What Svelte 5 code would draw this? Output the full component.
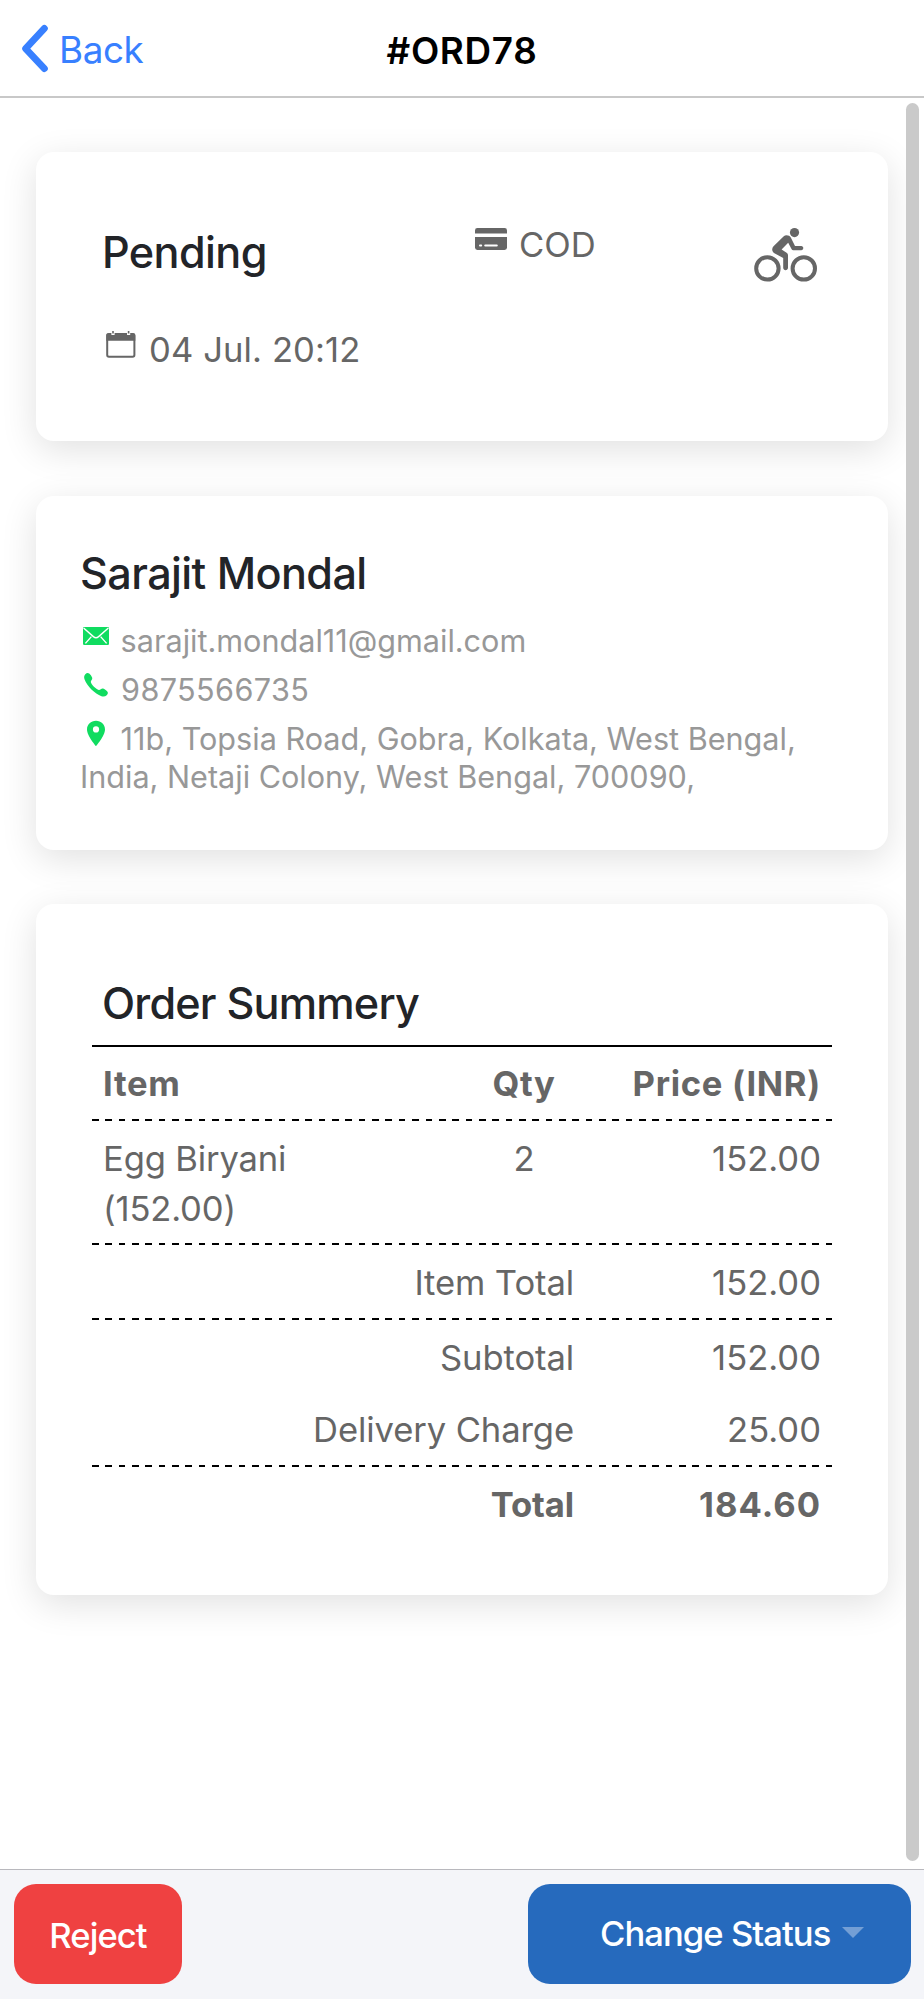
<script>
  const order = {
    id: "#ORD78",
    status: "Pending",
    payment: "COD",
    date: "04 Jul. 20:12",
  };

  const customer = {
    name: "Sarajit Mondal",
    email: "sarajit.mondal11@gmail.com",
    phone: "9875566735",
    address:
      "11b, Topsia Road, Gobra, Kolkata, West Bengal, India, Netaji Colony, West Bengal, 700090,",
  };

  const items = [{ name: "Egg Biryani", unit: "(152.00)", qty: 2, price: "152.00" }];

  const totals = [
    { label: "Item Total", value: "152.00", ruled: true },
    { label: "Subtotal", value: "152.00", ruled: true },
    { label: "Delivery Charge", value: "25.00" },
    { label: "Total", value: "184.60", ruled: true, strong: true },
  ];
</script>

<div class="page">
  <header class="toolbar">
    <button class="back">
      <svg width="28" height="50" viewBox="0 0 28 50" fill="none">
        <path
          d="M23.4 4.4L4.6 24.6L23.4 44.6"
          stroke="currentColor"
          stroke-width="6.8"
          stroke-linecap="round"
          stroke-linejoin="round"
        />
      </svg>
      <span>Back</span>
    </button>
    <h1 class="title">{order.id}</h1>
  </header>

  <main class="content">
    <section class="card status-card">
      <h2 class="heading">{order.status}</h2>
      <div class="meta payment">
        <svg width="32" height="22" viewBox="0 0 32 22">
          <path d="M0 5.4V2.4A2.4 2.4 0 0 1 2.4 0H29.6A2.4 2.4 0 0 1 32 2.4V5.4Z" fill="currentColor" />
          <path d="M0 9H32V19.6A2.4 2.4 0 0 1 29.6 22H2.4A2.4 2.4 0 0 1 0 19.6Z" fill="currentColor" />
          <path d="M5 17.6h1.2M10.2 17.6h11.6" stroke="#fff" stroke-width="2" stroke-linecap="round" />
        </svg>
        <span>{order.payment}</span>
      </div>
      <svg class="bike" width="64" height="54" viewBox="0 0 64 54">
        <g fill="none" stroke="currentColor">
          <circle cx="13.4" cy="40.4" r="11.2" stroke-width="4" />
          <circle cx="49.8" cy="40.4" r="11.2" stroke-width="4" />
        </g>
        <circle cx="40.5" cy="4.6" r="4.6" fill="currentColor" />
        <path
          d="M29.5 8.4C31.5 6.7 35.4 6.9 36.8 9.6L41 18H47.2C50 18 50 22.2 47.2 22.2H39.4C38.5 22.2 37.9 21.8 37.5 21L34.2 14.8L27.6 21.4L32.6 24.8C33.6 25.5 34 26.3 34 27.5V39.8C34 42.9 29.2 42.9 29.2 39.8V30L20.4 25.2C17.8 23.7 17.5 20.5 19.5 18.3Z"
          fill="currentColor"
        />
      </svg>
      <div class="meta date">
        <svg width="30" height="27" viewBox="0 0 30 27">
          <rect x="1.2" y="3" width="27.2" height="22.8" rx="1.8" fill="none" stroke="currentColor" stroke-width="2" />
          <path d="M.3 9.8V4.4A2 2 0 0 1 2.3 2.2H27.3A2 2 0 0 1 29.3 4.4V9.8Z" fill="currentColor" />
          <path d="M7 0V4M22.6 0V4" stroke="#fff" stroke-width="3.2" />
          <path d="M7 0V2.4M22.6 0V2.4" stroke="currentColor" stroke-width="1.6" />
        </svg>
        <span>{order.date}</span>
      </div>
    </section>

    <section class="card customer-card">
      <h2 class="heading">{customer.name}</h2>
      <p class="contact">
        <svg width="28" height="27" viewBox="0 0 28 27">
          <rect x="1" y="5" width="26" height="18" rx="1.2" fill="currentColor" />
          <path
            d="M1.6 6L11.4 14.6Q14 16.8 16.6 14.6L26.4 6M3.4 21.4L9.4 14.6M24.6 21.4L18.6 14.6"
            fill="none"
            stroke="#fff"
            stroke-width="1.4"
          />
        </svg>
        {customer.email}
      </p>
      <p class="contact phone">
        <svg width="28" height="27" viewBox="0 0 28 27">
          <path
            d="M3.3 3.2C4.6 1.8 6 1.5 7.2 2.6C8.6 4 9.7 5.4 10.2 6.8C10.8 8.6 8.6 9.4 8.8 11.1C9.2 13.6 14.2 18.5 16.8 18.9C18.4 19.1 19.4 17 21.1 17.5C22.7 18 24 19.1 25.3 20.4C26.3 21.5 26 23 24.7 24.2C23.3 25.5 21.5 25.8 19.5 25.2C12.8 23 5 15.2 2.6 8.6C1.9 6.5 1.9 4.6 3.3 3.2Z"
            fill="currentColor"
          />
        </svg>
        {customer.phone}
      </p>
      <p class="contact">
        <svg width="28" height="27" viewBox="0 0 28 27">
          <path
            d="M14 .8C8.9 .8 5 4.6 5 9.4C5 15.9 14 26 14 26S23 15.9 23 9.4C23 4.6 19.1 .8 14 .8ZM14 12.5A3.1 3.1 0 1 1 14 6.3A3.1 3.1 0 0 1 14 12.5Z"
            fill="currentColor"
          />
        </svg>
        {customer.address}
      </p>
    </section>

    <section class="card summary-card">
      <h2 class="heading">Order Summery</h2>
      <div class="table">
        <div class="row head">
          <span>Item</span>
          <span class="qty">Qty</span>
          <span class="price">Price (INR)</span>
        </div>
        {#each items as item}
          <div class="row ruled">
            <span class="name">{item.name}<br />{item.unit}</span>
            <span class="qty">{item.qty}</span>
            <span class="price">{item.price}</span>
          </div>
        {/each}
        {#each totals as line}
          <div class="row" class:ruled={line.ruled} class:strong={line.strong}>
            <span class="label">{line.label}</span>
            <span class="price">{line.value}</span>
          </div>
        {/each}
      </div>
    </section>

    <div class="scrollbar"></div>
  </main>

  <footer class="actions">
    <button class="btn reject">Reject</button>
    <button class="btn change">
      <span>Change Status</span>
      <span class="caret"></span>
    </button>
  </footer>
</div>

<style>
  :global(body) {
    background: #fff;
  }

  .page {
    box-sizing: border-box;
    width: 924px;
    height: 2000px;
    padding-bottom: 1px;
    display: flex;
    flex-direction: column;
    overflow: hidden;
    background: #fff;
    color: #666;
    font-family: Inter, "Liberation Sans", sans-serif;
    font-size: 34.6px;
    line-height: 50px;
  }

  h1,
  h2,
  p {
    margin: 0;
  }

  button {
    border: none;
    padding: 0;
    font-family: inherit;
    cursor: pointer;
  }

  .toolbar {
    box-sizing: border-box;
    flex: none;
    height: 98px;
    display: grid;
    grid-template-columns: 1fr auto 1fr;
    align-items: start;
    border-bottom: 2px solid #c8c8c8;
  }

  .back {
    display: flex;
    padding: 24px 0 0 21px;
    background: none;
    color: #3880ff;
    font-size: 36.8px;
    line-height: 50px;
    letter-spacing: -0.4px;
  }
  .back span {
    margin-left: 10px;
    padding-top: 1px;
  }

  .title {
    padding-top: 26px;
    color: #000;
    font-size: 36.8px;
    font-weight: 600;
    letter-spacing: 0.7px;
  }

  .content {
    position: relative;
    flex: 1;
    min-height: 0;
    padding: 54px 36px 0;
    display: flex;
    flex-direction: column;
    gap: 54.5px;
  }

  .card {
    box-sizing: border-box;
    flex: none;
    border-radius: 18px;
    background: #fff;
    box-shadow: 0 9px 36px rgba(0, 0, 0, 0.12);
  }

  .heading {
    color: #222428;
    font-size: 43.2px;
    font-weight: 500;
    line-height: 52px;
    letter-spacing: -0.6px;
  }

  .status-card {
    height: 289px;
    padding: 67px 70px 0 66px;
    display: grid;
    grid-template-columns: 373px 1fr auto;
    grid-template-rows: 105px auto;
  }
  .status-card .heading {
    padding-top: 7px;
  }
  .meta {
    display: flex;
    align-items: flex-start;
  }
  .payment svg {
    margin: 9px 12px 0 0;
  }
  .bike {
    margin-top: 9px;
  }
  .date {
    grid-column: 1 / -1;
    letter-spacing: 0.1px;
  }
  .date svg {
    margin: 7px 13px 0 4px;
  }

  .customer-card {
    height: 354px;
    padding: 51px 44px 0 44px;
  }
  .customer-card .heading {
    margin-bottom: 23px;
  }
  .contact {
    margin-bottom: 11.2px;
    color: #989898;
    font-size: 30.6px;
    line-height: 38px;
  }
  .contact svg {
    margin: 0 2px 0 2px;
    vertical-align: 3px;
    color: #10dc60;
  }
  .phone {
    letter-spacing: 0.4px;
  }

  .summary-card {
    height: 691px;
    padding: 73px 56px 0;
  }
  .summary-card .heading {
    padding: 0 10px 16px;
    letter-spacing: -0.8px;
  }
  .table {
    border-top: 2px solid #000;
  }
  .row {
    display: grid;
    grid-template-columns: 371px 100px 1fr;
    padding: 12px 11px 10.5px;
  }
  .ruled {
    padding-top: 14px;
    background: repeating-linear-gradient(90deg, #000 0 6.67px, transparent 6.67px 13.34px) top / 100% 2.4px no-repeat;
  }
  .head,
  .strong {
    font-weight: 700;
    letter-spacing: 0.7px;
  }
  .head {
    padding-top: 11px;
    padding-bottom: 10.7px;
  }
  .strong .price {
    letter-spacing: 1px;
  }
  .name {
    letter-spacing: -0.15px;
  }
  .qty {
    text-align: center;
  }
  .label {
    grid-column: 1 / 3;
    text-align: right;
    letter-spacing: -0.1px;
  }
  .price {
    text-align: right;
  }

  /* overlay scroll thumb */
  .scrollbar {
    position: absolute;
    top: 5px;
    right: 5px;
    bottom: 8px;
    width: 13px;
    border-radius: 7px;
    background: #cacaca;
  }

  .actions {
    box-sizing: border-box;
    flex: none;
    height: 130px;
    padding: 14px 13px 0 14px;
    display: flex;
    justify-content: space-between;
    align-items: flex-start;
    border-top: 1px solid #b8b8bd;
    background: #f4f5f9;
  }

  .btn {
    box-sizing: border-box;
    height: 100px;
    border-radius: 22px;
    color: #fff;
    font-size: 34.6px;
    font-weight: 500;
    line-height: 50px;
    letter-spacing: -0.95px;
  }
  .reject {
    width: 168px;
    padding-top: 2px;
    background: #ef4141;
  }
  .change {
    width: 383px;
    padding: 0 0 3px 72px;
    display: flex;
    align-items: center;
    background: #266abd;
  }
  .caret {
    margin-left: 12px;
    border: 11px solid transparent;
    border-top-color: #749fd5;
    border-bottom: none;
  }
</style>
